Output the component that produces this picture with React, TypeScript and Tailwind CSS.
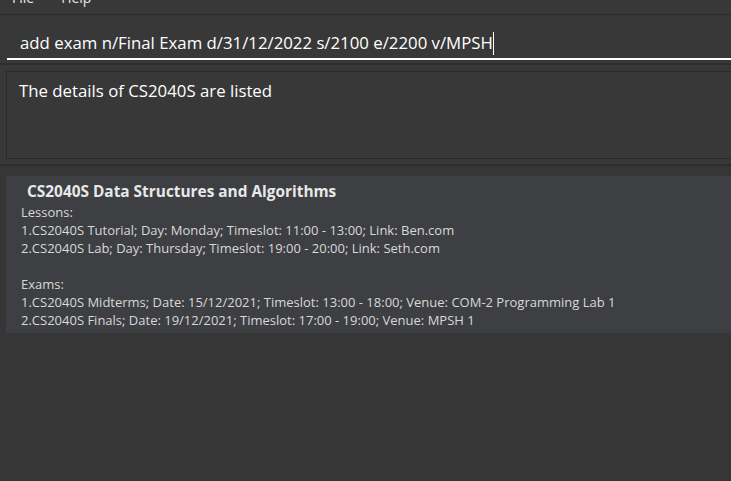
const lessons = [
  "1.CS2040S Tutorial; Day: Monday; Timeslot: 11:00 - 13:00; Link: Ben.com",
  "2.CS2040S Lab; Day: Thursday; Timeslot: 19:00 - 20:00; Link: Seth.com",
]

const exams = [
  "1.CS2040S Midterms; Date: 15/12/2021; Timeslot: 13:00 - 18:00; Venue: COM-2 Programming Lab 1",
  "2.CS2040S Finals; Date: 19/12/2021; Timeslot: 17:00 - 19:00; Venue: MPSH 1",
]

export default function App() {
  return (
    <div
      className="w-[731px] h-[481px] overflow-hidden bg-[#353535] flex flex-col"
      style={{ fontFamily: '"Open Sans", sans-serif' }}
    >
      {/* menu bar, scrolled half out of view */}
      <div className="h-[15px] shrink-0 overflow-hidden bg-[#383838] border-b border-[#2b2b2b]">
        <div className="flex gap-[27px] pl-[12px] -mt-[12px] text-[14px] leading-[20px] text-[#e8e8e8]">
          <span>File</span>
          <span>Help</span>
        </div>
      </div>

      {/* command box */}
      <div className="h-[50px] shrink-0 bg-[#383838] pl-[7px] pt-[13px] border-b-2 border-[#2e2e2e]">
        <div className="flex items-center h-[32px] border-b-2 border-white pl-[13px] text-[16.8px] text-white">
          <span>add exam n/Final Exam d/31/12/2022 s/2100 e/2200 v/MPSH</span>
          <span className="w-px h-[23px] bg-white" />
        </div>
      </div>

      {/* result display */}
      <div className="h-[101px] shrink-0 bg-[#383838] pt-[6px] pl-[6px] border-b-2 border-[#2e2e2e]">
        <div className="h-[88px] border border-r-0 border-[#2a2a2a] pl-[12px] pt-[6px] text-[16.8px] text-white">
          The details of CS2040S are listed
        </div>
      </div>

      {/* module list */}
      <div className="flex-1 bg-[#363636] pt-[10px] pl-[6px]">
        <div className="bg-[#3e3f42] pt-[5px] pb-[4px] pl-[15px]">
          <div className="pl-[6px] text-[15.4px] leading-[22px] font-bold text-[#e8e8e8]">
            CS2040S Data Structures and Algorithms
          </div>
          <div className="text-[13px] leading-[18px] text-[#d8d8d8]">
            <div>Lessons:</div>
            {lessons.map((l, i) => (
              <div key={i}>{l}</div>
            ))}
            <div className="h-[18px]" />
            <div>Exams:</div>
            {exams.map((e, i) => (
              <div key={i}>{e}</div>
            ))}
          </div>
        </div>
      </div>
    </div>
  )
}
